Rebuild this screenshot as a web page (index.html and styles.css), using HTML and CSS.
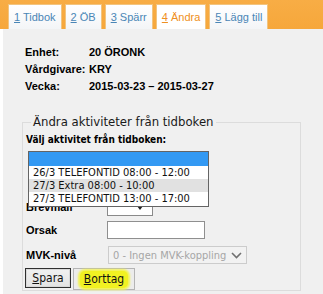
FILE: index.html
```html
<!DOCTYPE html>
<html lang="sv">
<head>
<meta charset="utf-8">
<title>Ändra</title>
<link rel="stylesheet" href="styles.css">
</head>
<body>
<div class="header">
  <nav class="tabs">
    <a class="tab"><u>1</u> Tidbok</a>
    <a class="tab"><u>2</u> ÖB</a>
    <a class="tab"><u>3</u> Spärr</a>
    <a class="tab active"><u>4</u> Ändra</a>
    <a class="tab"><u>5</u> Lägg till</a>
  </nav>
</div>
<main class="main">
  <dl class="info">
    <dt>Enhet:</dt><dd>20 ÖRONK</dd>
    <dt>Vårdgivare:</dt><dd>KRY</dd>
    <dt>Vecka:</dt><dd>2015-03-23 – 2015-03-27</dd>
  </dl>
  <fieldset class="box">
    <legend class="legend">Ändra aktiviteter från tidboken</legend>
    <div class="pick-label">Välj aktivitet från tidboken:</div>
    <div class="select-wrap">
      <div class="closed-select"></div>
      <ul class="popup">
        <li class="opt selected">&nbsp;</li>
        <li class="opt">26/3 TELEFONTID 08:00 - 12:00</li>
        <li class="opt hover">27/3 Extra 08:00 - 10:00</li>
        <li class="opt">27/3 TELEFONTID 13:00 - 17:00</li>
      </ul>
    </div>
    <div class="row row-brev">
      <span class="lbl">Brevmall</span>
      <div class="small-select"><span class="tri"></span></div>
    </div>
    <div class="row row-orsak">
      <span class="lbl">Orsak</span>
      <div class="input"></div>
    </div>
    <div class="row row-mvk">
      <span class="lbl">MVK-nivå</span>
      <div class="mvk-select">
        <span>0 - Ingen MVK-koppling</span>
        <svg class="chev" width="11" height="7" viewBox="0 0 11 7"><polyline points="1,1 5.5,5.5 10,1" fill="none" stroke="#707070" stroke-width="1.6"/></svg>
      </div>
    </div>
    <div class="buttons">
      <button class="btn btn-default"><u>S</u>para</button>
      <button class="btn btn-del"><span class="mark"><u>B</u>orttag</span></button>
    </div>
  </fieldset>
</main>
</body>
</html>
```
FILE: styles.css
```css
html, body {
  margin: 0;
  padding: 0;
}
body {
  width: 323px;
  height: 294px;
  overflow: hidden;
  background: #ffffff;
  font-family: "Liberation Sans", Arial, sans-serif;
  font-size: 11px;
  color: #000;
}
.header {
  height: 29px;
  background: linear-gradient(#f8ad45, #f6a73b);
  display: flex;
  align-items: flex-end;
  padding-left: 8px;
  box-sizing: border-box;
}
.tabs {
  display: flex;
  gap: 3px;
  align-items: flex-end;
}
.tab {
  height: 25px;
  box-sizing: border-box;
  border: 1px solid #f2c47f;
  border-bottom: none;
  background: linear-gradient(#ffffff, #f3f5f7);
  padding: 0 5px;
  line-height: 24px;
  color: #4a86b6;
  font-size: 11px;
  white-space: nowrap;
}
.tab.active {
  background: #ffffff;
  color: #ef8f22;
}
.main {
  margin-left: 3px;
  height: 265px;
  background: #f0f0f0;
  padding-left: 19px;
  padding-top: 15px;
  box-sizing: border-box;
}
.info {
  margin: 0;
  display: grid;
  grid-template-columns: 64px auto;
  line-height: 17px;
  font-weight: bold;
  padding-left: 3px;
}
.info dt, .info dd {
  margin: 0;
}
.box {
  margin: 19px 0 0 0;
  width: 279px;
  box-sizing: border-box;
  border: 1px solid #dcdcdc;
  padding: 3px 0 0 3px;
  min-inline-size: 0;
}
.legend {
  font-family: "DejaVu Sans Condensed", "DejaVu Sans", sans-serif;
  font-size: 13px;
  line-height: 16px;
  padding: 0 2px;
  margin-left: 5px;
  color: #1a1a1a;
}
.pick-label {
  font-family: "DejaVu Sans Condensed", "DejaVu Sans", sans-serif;
  font-weight: bold;
  font-size: 10px;
  line-height: 13px;
  margin-bottom: 5px;
}
.select-wrap {
  position: relative;
  height: 20px;
}
.closed-select {
  margin-left: 2px;
  width: 181px;
  height: 20px;
  box-sizing: border-box;
  border: 1px solid #a0a0a0;
  background: #fff;
}
.popup {
  position: absolute;
  top: 0;
  left: 2px;
  width: 181px;
  margin: 0;
  padding: 0;
  list-style: none;
  box-sizing: border-box;
  border: 1px solid #646464;
  background: #fff;
  font-family: "DejaVu Sans Condensed", "DejaVu Sans", sans-serif;
  font-size: 11px;
  z-index: 2;
}
.opt {
  height: 13px;
  line-height: 13px;
  padding-left: 4px;
  white-space: nowrap;
  color: #111;
}
.opt.selected {
  height: 14px;
  background: #3399f3;
}
.opt:last-child {
  height: 14px;
}
.opt.hover {
  background: #e1e1e1;
}
.row {
  display: grid;
  grid-template-columns: 81px auto;
  align-items: center;
  font-weight: bold;
}
.row-brev {
  margin-top: 26px;
  height: 19px;
}
.small-select {
  width: 46px;
  height: 19px;
  box-sizing: border-box;
  border: 1px solid #8a8a8a;
  background: #fff;
  position: relative;
}
.tri {
  position: absolute;
  right: 9px;
  bottom: 5px;
  width: 0;
  height: 0;
  border-left: 3px solid transparent;
  border-right: 3px solid transparent;
  border-top: 4px solid #222;
}
.row-orsak {
  margin-top: 5px;
  height: 18px;
}
.input {
  width: 98px;
  height: 18px;
  box-sizing: border-box;
  border: 1px solid #8f8f8f;
  background: #fff;
}
.row-mvk {
  margin-top: 7px;
  height: 18px;
}
.mvk-select {
  margin-left: 1px;
  width: 139px;
  height: 18px;
  box-sizing: border-box;
  border: 1px solid #cccccc;
  background: #f2f2f2;
  display: flex;
  align-items: center;
  justify-content: space-between;
  padding: 0 4px 0 4px;
  font-family: "DejaVu Sans Condensed", "DejaVu Sans", sans-serif;
  font-weight: normal;
  font-size: 11px;
  color: #a6a6a6;
  white-space: nowrap;
}
.chev {
  display: block;
}
.buttons {
  margin-top: 4px;
  margin-left: -1px;
  display: flex;
  gap: 2px;
  align-items: flex-start;
}
.btn {
  font-family: "DejaVu Sans Condensed", "DejaVu Sans", sans-serif;
  font-size: 12px;
  color: #111;
  margin: 0;
  padding: 0;
  box-sizing: border-box;
  cursor: default;
}
.btn-default {
  width: 46px;
  height: 20px;
  border: 1px solid #2f2f2f;
  box-shadow: inset 0 0 0 1px #d8d8d8;
  background: linear-gradient(#f1f1f1, #e3e3e3);
}
.btn-del {
  width: 62px;
  height: 22px;
  border: 1px solid #b4b4b4;
  background: #ececec;
  display: flex;
  align-items: center;
  justify-content: center;
}
.mark {
  display: block;
  background: #f1f122;
  border-radius: 5px;
  box-shadow: 0 0 2px 2px #f3f356;
  padding: 1px 4px 2px 4px;
  line-height: 14px;
}
```
